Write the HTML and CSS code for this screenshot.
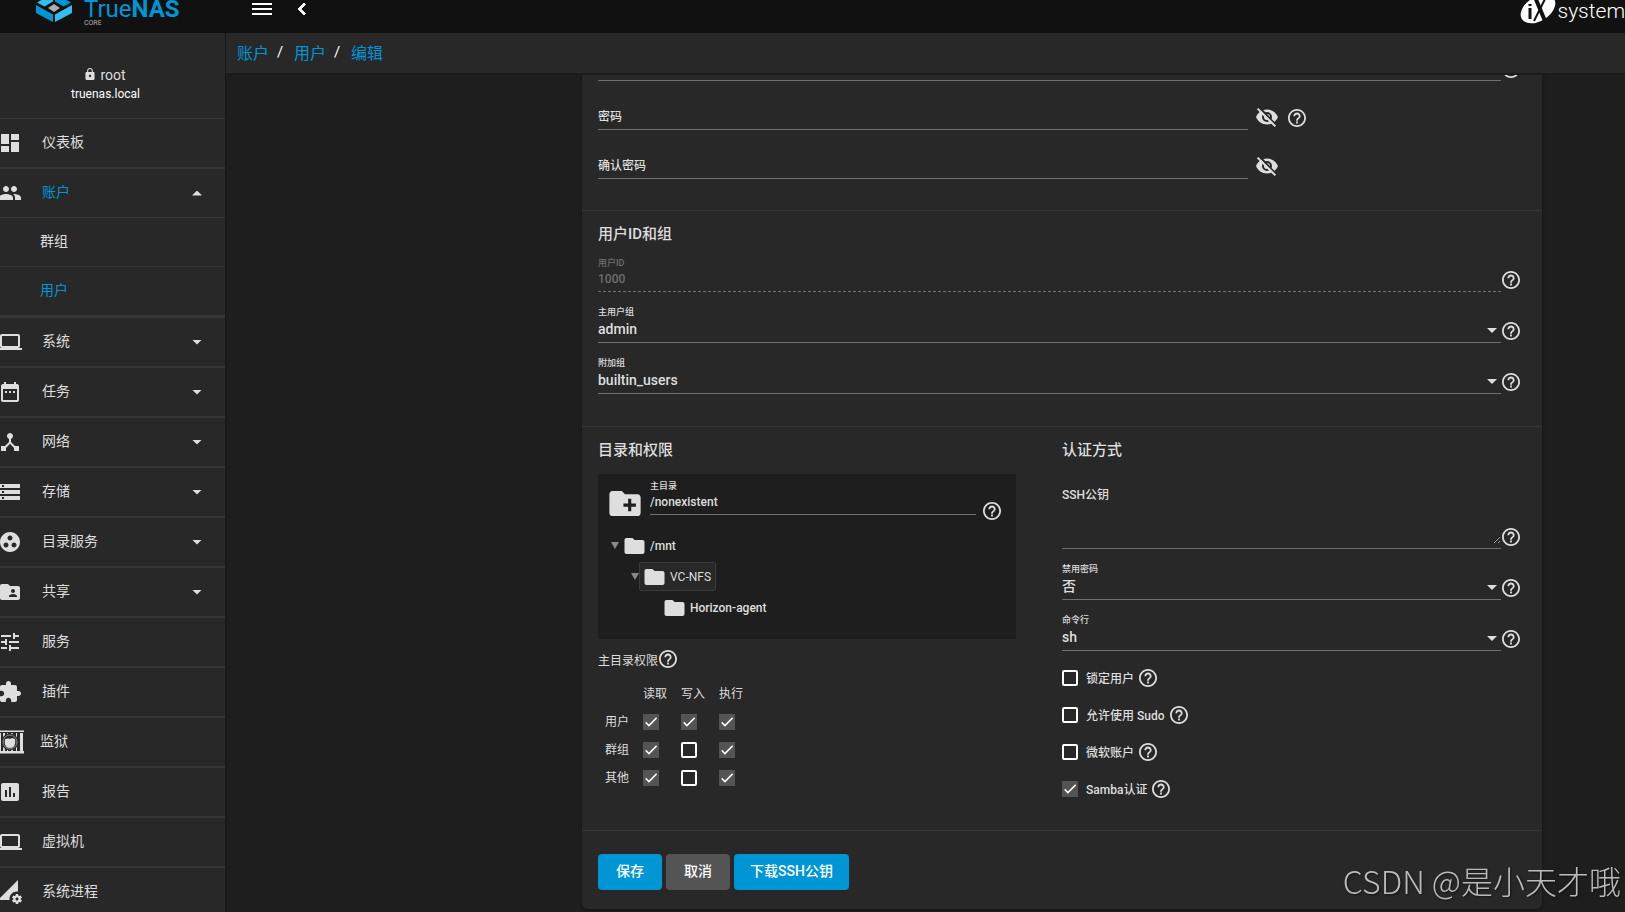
FILE: index.html
```html
<!DOCTYPE html>
<html lang="zh-CN">
<head>
    <meta charset="utf-8" />
    <title>TrueNAS - 编辑用户</title>
    <link rel="stylesheet" href="styles.css">
</head>
<body>
<!-- Icon set -->
<svg class="icon-defs" aria-hidden="true">
    <symbol id="i-dashboard" viewBox="0 0 24 24"><path d="M3 13h8V3H3v10zm0 8h8v-6H3v6zm10 0h8V11h-8v10zm0-18v6h8V3h-8z"/></symbol>
    <symbol id="i-people" viewBox="0 0 24 24"><path d="M16 11c1.66 0 2.99-1.34 2.99-3S17.66 5 16 5c-1.66 0-3 1.34-3 3s1.34 3 3 3zm-8 0c1.66 0 2.99-1.34 2.99-3S9.66 5 8 5C6.34 5 5 6.34 5 8s1.34 3 3 3zm0 2c-2.33 0-7 1.17-7 3.5V19h14v-2.5c0-2.33-4.67-3.5-7-3.5zm8 0c-.29 0-.62.02-.97.05 1.16.84 1.97 1.97 1.97 3.45V19h6v-2.5c0-2.33-4.67-3.5-7-3.5z"/></symbol>
    <symbol id="i-laptop" viewBox="0 0 24 24"><path d="M20 18c1.1 0 2-.9 2-2V6c0-1.1-.9-2-2-2H4c-1.1 0-2 .9-2 2v10c0 1.1.9 2 2 2H0v2h24v-2h-4zM4 6h16v10H4V6z"/></symbol>
    <symbol id="i-tasks" viewBox="0 0 24 24"><path d="M9 11H7v2h2v-2zm4 0h-2v2h2v-2zm4 0h-2v2h2v-2zm2-7h-1V2h-2v2H8V2H6v2H5c-1.11 0-1.99.9-1.99 2L3 20c0 1.1.89 2 2 2h14c1.1 0 2-.9 2-2V6c0-1.1-.9-2-2-2zm0 16H5V9h14v11z"/></symbol>
    <symbol id="i-network" viewBox="0 0 24 24"><path d="M17 16l-4-4V8.82C14.16 8.4 15 7.3 15 6c0-1.66-1.34-3-3-3S9 4.34 9 6c0 1.3.84 2.4 2 2.82V12l-4 4H3v5h5v-3.05l4-4.2 4 4.2V21h5v-5h-4z"/></symbol>
    <symbol id="i-storage" viewBox="0 0 24 24"><path d="M2 20h20v-4H2v4zm2-3h2v2H4v-2zM2 4v4h20V4H2zm4 3H4V5h2v2zm-4 7h20v-4H2v4zm2-3h2v2H4v-2z"/></symbol>
    <symbol id="i-directory" viewBox="0 0 24 24"><path d="M12 2C6.48 2 2 6.48 2 12s4.48 10 10 10 10-4.48 10-10S17.52 2 12 2zM8 17.5c-1.38 0-2.5-1.12-2.5-2.5s1.12-2.5 2.5-2.5 2.5 1.12 2.5 2.5-1.12 2.5-2.5 2.5zM9.5 8c0-1.38 1.12-2.5 2.5-2.5s2.5 1.12 2.5 2.5-1.12 2.5-2.5 2.5S9.5 9.38 9.5 8zm6.5 9.5c-1.38 0-2.5-1.12-2.5-2.5s1.12-2.5 2.5-2.5 2.5 1.12 2.5 2.5-1.12 2.5-2.5 2.5z"/></symbol>
    <symbol id="i-sharing" viewBox="0 0 24 24"><path d="M20 6h-8l-2-2H4c-1.1 0-1.99.9-1.99 2L2 18c0 1.1.9 2 2 2h16c1.1 0 2-.9 2-2V8c0-1.1-.9-2-2-2zm-5 3c1.1 0 2 .9 2 2s-.9 2-2 2-2-.9-2-2 .9-2 2-2zm4 8h-8v-1c0-1.33 2.67-2 4-2s4 .67 4 2v1z"/></symbol>
    <symbol id="i-tune" viewBox="0 0 24 24"><path d="M3 17v2h6v-2H3zM3 5v2h10V5H3zm10 16v-2h8v-2h-8v-2h-2v6h2zM7 9v2H3v2h4v2h2V9H7zm14 4v-2H11v2h10zm-6-4h2V7h4V5h-4V3h-2v6z"/></symbol>
    <symbol id="i-plugin" viewBox="0 0 24 24"><path d="M20.5 11H19V7c0-1.1-.9-2-2-2h-4V3.5C13 2.12 11.88 1 10.5 1S8 2.12 8 3.5V5H4c-1.1 0-1.99.9-1.99 2v3.8H3.5c1.49 0 2.7 1.21 2.7 2.7s-1.21 2.7-2.7 2.7H2V20c0 1.1.9 2 2 2h3.8v-1.5c0-1.49 1.21-2.7 2.7-2.7 1.49 0 2.7 1.21 2.7 2.7V22H17c1.1 0 2-.9 2-2v-4h1.5c1.38 0 2.5-1.12 2.5-2.5S21.88 11 20.5 11z"/></symbol>
    <symbol id="i-jail" viewBox="0 0 24 24">
        <path d="M0 0h24v1H0zM0 23h24v1H0z" fill="#888"/>
        <path d="M0 1h24v1H0zM0 21h24v2H0zM0 3h1v18H0zM3 3h2v18H3zM7 3h1v18H7zM11 3h2v18h-2zM16 3h1v18h-1zM20 3h3v18h-3z"/>
        <circle cx="10" cy="12" r="8.500" fill="#282828"/>
        <circle cx="10" cy="12" r="7" fill="none" stroke="#888" stroke-width="1"/>
        <path d="M5 9c2 0 3-1 5 0l2-1 3 1c1 6-1 9-5 9s-6-3-5-9z"/>
    </symbol>
    <symbol id="i-report" viewBox="0 0 24 24"><path d="M19 3H5c-1.1 0-2 .9-2 2v14c0 1.1.9 2 2 2h14c1.1 0 2-.9 2-2V5c0-1.1-.9-2-2-2zM9 17H7v-7h2v7zm4 0h-2V7h2v10zm4 0h-2v-4h2v4z"/></symbol>
    <symbol id="i-process" viewBox="0 0 24 24"><path d="M18.99 11.5c.34 0 .67.03 1 .07L20 0 0 20h11.56c-.04-.33-.07-.66-.07-1 0-4.14 3.36-7.5 7.5-7.5zm3.71 7.99c.02-.16.04-.32.04-.49 0-.17-.01-.33-.04-.49l1.06-.83c.09-.08.12-.21.06-.32l-1-1.73c-.06-.11-.19-.15-.31-.11l-1.24.5c-.26-.2-.54-.37-.85-.49l-.19-1.32c-.01-.12-.12-.21-.24-.21h-2c-.12 0-.23.09-.25.21l-.19 1.32c-.3.13-.59.29-.85.49l-1.24-.5c-.11-.04-.24 0-.31.11l-1 1.73c-.06.11-.04.24.06.32l1.06.83c-.02.16-.03.32-.03.49 0 .17.01.33.03.49l-1.06.83c-.09.08-.12.21-.06.32l1 1.73c.06.11.19.15.31.11l1.24-.5c.26.2.54.37.85.49l.19 1.32c.02.12.12.21.25.21h2c.12 0 .23-.09.25-.21l.19-1.32c.3-.13.59-.29.84-.49l1.25.5c.11.04.24 0 .31-.11l1-1.73c.06-.11.03-.24-.06-.32l-1.07-.83zm-3.71 1.01c-.83 0-1.5-.67-1.5-1.5s.67-1.5 1.5-1.5 1.5.67 1.5 1.5-.67 1.5-1.5 1.5z"/></symbol>
    <symbol id="i-help" viewBox="2 2 20 20"><path d="M11 18h2v-2h-2v2zm1-16C6.48 2 2 6.48 2 12s4.48 10 10 10 10-4.48 10-10S17.52 2 12 2zm0 18c-4.41 0-8-3.59-8-8s3.59-8 8-8 8 3.59 8 8-3.59 8-8 8zm0-14c-2.21 0-4 1.79-4 4h2c0-1.1.9-2 2-2s2 .9 2 2c0 2-3 1.75-3 5h2c0-2.25 3-2.5 3-5 0-2.21-1.79-4-4-4z"/></symbol>
    <symbol id="i-hidden" viewBox="0 0 24 24">
        <path fill-rule="evenodd" d="M12 4.500C7 4.500 2.700 7.600 1 12c1.700 4.400 6 7.500 11 7.500s9.300-3.100 11-7.500c-1.700-4.400-6-7.500-11-7.500zM12 7a5 5 0 0 1 0 10 5 5 0 0 1 0-10zm0 2a3 3 0 0 0 0 6 3 3 0 0 0 0-6z"/>
        <path d="M4 2l18 19" stroke="#282828" stroke-width="2"/>
        <path d="M2.600 3.600L20.400 21.400" stroke="currentColor" stroke-width="2"/>
    </symbol>
    <symbol id="i-folder" viewBox="2 4 20 16"><path d="M10 4H4c-1.1 0-1.99.9-1.99 2L2 18c0 1.1.9 2 2 2h16c1.1 0 2-.9 2-2V8c0-1.1-.9-2-2-2h-8l-2-2z"/></symbol>
    <symbol id="i-folder-add" viewBox="2 4 20 16"><path d="M20 6h-8l-2-2H4c-1.11 0-1.99.89-1.99 2L2 18c0 1.11.89 2 2 2h16c1.11 0 2-.89 2-2V8c0-1.11-.89-2-2-2zm-1 8h-3v3h-2v-3h-3v-2h3V9h2v3h3v2z"/></symbol>
    <symbol id="i-lock" viewBox="4 1 16 21"><path d="M18 8h-1V6c0-2.76-2.24-5-5-5S7 3.24 7 6v2H6c-1.1 0-2 .9-2 2v10c0 1.1.9 2 2 2h12c1.1 0 2-.9 2-2V10c0-1.1-.9-2-2-2zm-6 9c-1.1 0-2-.9-2-2s.9-2 2-2 2 .9 2 2-.9 2-2 2zm3.1-9H8.9V6c0-1.71 1.39-3.1 3.1-3.1 1.71 0 3.1 1.39 3.1 3.1v2z"/></symbol>
</svg>

<!-- Top bar -->
<header class="topbar">
    <a class="brand" href="#">
        <svg class="brand-mark" viewBox="0 -12 36 34">
            <path fill="#31beec" d="M1 2.500L17-6.500V1.500L8.500 6.500z"/>
            <path fill="#0095d5" d="M35 2.500L19-6.500V1.500L27.500 6.500z"/>
            <path fill="#aeadae" d="M12 8l6-4 6 4-6 4z"/>
            <path fill="#0095d5" d="M0 5l17 9.500V22L0 13z"/>
            <path fill="#31beec" d="M36 5l-17 9.500V22l17-9z"/>
        </svg>
        <span class="brand-text">
            <span class="brand-name">True<b>NAS</b></span>
            <span class="brand-edition">CORE</span>
        </span>
    </a>
    <button class="bar-button menu-toggle" aria-label="菜单">
        <svg width="20" height="12" viewBox="0 0 20 12"><path d="M0 0h20v2H0zM0 5h20v2H0zM0 10h20v2H0z"/></svg>
    </button>
    <button class="bar-button back" aria-label="返回">
        <svg width="8" height="12" viewBox="8 6 8 12"><path d="M15.410 7.410L14 6l-6 6 6 6 1.410-1.410L10.830 12z" stroke="currentColor"/></svg>
    </button>
    <a class="ix" href="#">
        <svg width="36" height="30" viewBox="0 -7 36 30">
            <ellipse cx="18" cy="8" rx="19" ry="12" transform="rotate(-32 18 8)" fill="#fff"/>
            <path d="M10 7v11M10 3v2" stroke="#111" stroke-width="3" fill="none"/>
            <path d="M15-4l10 24" stroke="#111" stroke-width="4"/>
            <path d="M26-4L14 20" stroke="#111" stroke-width="2"/>
        </svg>
        <span>system</span>
    </a>
</header>

<div class="layout">
    <!-- Side menu -->
    <aside class="sidebar">
        <div class="account">
            <div class="account-user"><svg><use href="#i-lock"/></svg>root</div>
            <div class="account-host">truenas.local</div>
        </div>
        <nav>
            <ul class="menu">
                <li><a href="#"><svg><use href="#i-dashboard"/></svg>仪表板</a></li>
                <li class="open">
                    <a href="#" class="active"><svg><use href="#i-people"/></svg>账户<i class="caret up"></i></a>
                    <ul class="submenu">
                        <li><a href="#">群组</a></li>
                        <li><a href="#" class="active">用户</a></li>
                    </ul>
                </li>
                <li><a href="#"><svg><use href="#i-laptop"/></svg>系统<i class="caret"></i></a></li>
                <li><a href="#"><svg><use href="#i-tasks"/></svg>任务<i class="caret"></i></a></li>
                <li><a href="#"><svg><use href="#i-network"/></svg>网络<i class="caret"></i></a></li>
                <li><a href="#"><svg><use href="#i-storage"/></svg>存储<i class="caret"></i></a></li>
                <li><a href="#"><svg><use href="#i-directory"/></svg>目录服务<i class="caret"></i></a></li>
                <li><a href="#"><svg><use href="#i-sharing"/></svg>共享<i class="caret"></i></a></li>
                <li><a href="#"><svg><use href="#i-tune"/></svg>服务</a></li>
                <li><a href="#"><svg><use href="#i-plugin"/></svg>插件</a></li>
                <li><a href="#" class="jail"><svg><use href="#i-jail"/></svg>监狱</a></li>
                <li><a href="#"><svg><use href="#i-report"/></svg>报告</a></li>
                <li><a href="#"><svg><use href="#i-laptop"/></svg>虚拟机</a></li>
                <li><a href="#"><svg><use href="#i-process"/></svg>系统进程</a></li>
            </ul>
        </nav>
    </aside>

    <main class="main">
        <nav class="breadcrumb">
            <a href="#">账户</a><span>/</span><a href="#">用户</a><span>/</span><a href="#">编辑</a>
        </nav>

        <div class="scroll">
            <form class="card">
                <!-- Identification -->
                <section class="section identity">
                    <div class="row">
                        <div class="field"><input type="email" id="email" aria-label="Email"></div>
                        <svg class="help"><use href="#i-help"/></svg>
                    </div>
                    <div class="row password">
                        <div class="field floating">
                            <label for="password">密码</label>
                            <input type="password" id="password">
                        </div>
                        <button type="button" class="eye" aria-label="显示密码"><svg><use href="#i-hidden"/></svg></button>
                        <svg class="help"><use href="#i-help"/></svg>
                    </div>
                    <div class="row password">
                        <div class="field floating">
                            <label for="password2">确认密码</label>
                            <input type="password" id="password2">
                        </div>
                        <button type="button" class="eye" aria-label="显示密码"><svg><use href="#i-hidden"/></svg></button>
                    </div>
                </section>

                <!-- User ID and groups -->
                <section class="section">
                    <h4>用户ID和组</h4>
                    <div class="rows">
                        <div class="row">
                            <div class="field disabled">
                                <label for="uid">用户ID</label>
                                <input type="text" id="uid" value="1000" disabled>
                            </div>
                            <svg class="help"><use href="#i-help"/></svg>
                        </div>
                        <div class="row">
                            <div class="field select">
                                <label for="group">主用户组</label>
                                <select id="group"><option>admin</option></select>
                            </div>
                            <svg class="help"><use href="#i-help"/></svg>
                        </div>
                        <div class="row">
                            <div class="field select">
                                <label for="aux">附加组</label>
                                <select id="aux"><option>builtin_users</option></select>
                            </div>
                            <svg class="help"><use href="#i-help"/></svg>
                        </div>
                    </div>
                </section>

                <!-- Directories / authentication -->
                <div class="section columns">
                    <section class="directories">
                        <h4>目录和权限</h4>
                        <div class="explorer">
                            <div class="explorer-head">
                                <svg class="folder-add"><use href="#i-folder-add"/></svg>
                                <div class="field">
                                    <label for="home">主目录</label>
                                    <input type="text" id="home" value="/nonexistent">
                                </div>
                                <svg class="help"><use href="#i-help"/></svg>
                            </div>
                            <ul class="tree">
                                <li>
                                    <div class="node"><i class="toggle"></i><span class="node-label"><svg><use href="#i-folder"/></svg>/mnt</span></div>
                                    <ul>
                                        <li>
                                            <div class="node"><i class="toggle"></i><span class="node-label selected"><svg><use href="#i-folder"/></svg>VC-NFS</span></div>
                                            <ul>
                                                <li>
                                                    <div class="node leaf"><span class="node-label"><svg><use href="#i-folder"/></svg>Horizon-agent</span></div>
                                                </li>
                                            </ul>
                                        </li>
                                    </ul>
                                </li>
                            </ul>
                        </div>
                        <div class="perm-title">主目录权限<svg class="help"><use href="#i-help"/></svg></div>
                        <table class="perms">
                            <thead>
                                <tr><th></th><th>读取</th><th>写入</th><th>执行</th></tr>
                            </thead>
                            <tbody>
                                <tr>
                                    <th>用户</th>
                                    <td><input type="checkbox" aria-label="用户 读取" checked></td>
                                    <td><input type="checkbox" aria-label="用户 写入" checked></td>
                                    <td><input type="checkbox" aria-label="用户 执行" checked></td>
                                </tr>
                                <tr>
                                    <th>群组</th>
                                    <td><input type="checkbox" aria-label="群组 读取" checked></td>
                                    <td><input type="checkbox" aria-label="群组 写入"></td>
                                    <td><input type="checkbox" aria-label="群组 执行" checked></td>
                                </tr>
                                <tr>
                                    <th>其他</th>
                                    <td><input type="checkbox" aria-label="其他 读取" checked></td>
                                    <td><input type="checkbox" aria-label="其他 写入"></td>
                                    <td><input type="checkbox" aria-label="其他 执行" checked></td>
                                </tr>
                            </tbody>
                        </table>
                    </section>

                    <section class="auth">
                        <h4>认证方式</h4>
                        <div class="rows">
                            <div class="row">
                                <div class="field area">
                                    <label for="sshkey">SSH公钥</label>
                                    <textarea id="sshkey"></textarea>
                                </div>
                                <svg class="help"><use href="#i-help"/></svg>
                            </div>
                            <div class="row">
                                <div class="field select">
                                    <label for="disablepw">禁用密码</label>
                                    <select id="disablepw"><option>否</option></select>
                                </div>
                                <svg class="help"><use href="#i-help"/></svg>
                            </div>
                            <div class="row">
                                <div class="field select">
                                    <label for="shell">命令行</label>
                                    <select id="shell"><option>sh</option></select>
                                </div>
                                <svg class="help"><use href="#i-help"/></svg>
                            </div>
                        </div>
                        <div class="checks">
                            <div class="check"><input type="checkbox" id="lock"><label for="lock">锁定用户</label><svg class="help"><use href="#i-help"/></svg></div>
                            <div class="check"><input type="checkbox" id="sudo"><label for="sudo">允许使用 Sudo</label><svg class="help"><use href="#i-help"/></svg></div>
                            <div class="check"><input type="checkbox" id="ms"><label for="ms">微软账户</label><svg class="help"><use href="#i-help"/></svg></div>
                            <div class="check"><input type="checkbox" id="samba" checked><label for="samba">Samba认证</label><svg class="help"><use href="#i-help"/></svg></div>
                        </div>
                    </section>
                </div>

                <div class="actions">
                    <button type="submit" class="btn primary">保存</button>
                    <button type="button" class="btn">取消</button>
                    <button type="button" class="btn primary">下载SSH公钥</button>
                </div>
            </form>
        </div>
    </main>
</div>

<div class="watermark">CSDN @是小天才哦</div>
</body>
</html>
```

FILE: styles.css
```css
:root {
  --bg1: #1e1e1e;
  --bg2: #282828;
  --line: #353535;
  --fg1: #dedede;
  --fg2: #fff;
  --primary: #0095d5;
  --grey: #545454;
}
* {
  box-sizing: border-box;
}
body {
  margin: 0;
  height: 100vh;
  overflow: hidden;
  display: flex;
  flex-direction: column;
  font-family: Roboto, "Noto Sans CJK SC", sans-serif;
  font-size: 12px;
  background-color: var(--bg1);
  color: var(--fg1);
}
a {
  color: inherit;
  text-decoration: none;
}
ul {
  list-style: none;
  margin: 0;
  padding: 0;
}
svg {
  display: block;
  flex: none;
  fill: currentColor;
}
.icon-defs {
  position: absolute;
  width: 0;
  height: 0;
}

/* ============ Top bar ============ */
.topbar {
  flex: none;
  display: flex;
  align-items: center;
  height: 48px;
  margin-top: -15px;
  background-color: #111;
  overflow: hidden;
}
.brand {
  width: 226px;
  padding-left: 36px;
  display: flex;
  align-items: center;
  gap: 12px;
  color: var(--primary);
}
.brand-mark {
  width: 36px;
  height: 34px;
  margin-bottom: 8px;
}
.brand-text {
  display: flex;
  flex-direction: column;
  padding-top: 7px;
}
.brand-name {
  font-size: 24px;
  line-height: 22px;
}
.brand-name b {
  font-weight: 700;
}
.brand-edition {
  font-size: 7px;
  line-height: 7px;
  color: #aeadae;
}
.bar-button {
  padding: 0;
  border: 0;
  background: none;
  color: var(--fg2);
  cursor: pointer;
}
.menu-toggle {
  margin-left: 26px;
}
.back {
  margin-left: 26px;
}
.ix {
  margin-left: auto;
  display: flex;
  align-items: center;
  gap: 1px;
  font-size: 21px;
  line-height: 24px;
  font-weight: 300;
  color: var(--fg2);
}
.ix span {
  padding-top: 3px;
}

/* ============ Sidebar ============ */
.layout {
  flex: 1;
  min-height: 0;
  display: flex;
}
.sidebar {
  flex: none;
  width: 225px;
  overflow: hidden;
  background-color: var(--bg2);
  box-shadow: 1px 0 2px rgba(0, 0, 0, 0.3);
}
.account {
  height: 85px;
  padding: 32px 14px 0 0;
  text-align: center;
}
.account-user {
  display: flex;
  justify-content: center;
  align-items: center;
  gap: 5px;
  font-size: 14px;
  line-height: 20px;
}
.account-user svg {
  width: 10px;
  height: 12px;
  margin-bottom: 2px;
}
.account-host {
  line-height: 18px;
  color: var(--fg2);
}
.menu > li {
  border-top: 1px solid var(--line);
  border-bottom: 1px solid var(--line);
}
.menu a {
  display: flex;
  align-items: center;
  height: 48px;
  padding: 0 23px 4px 0;
  font-size: 14px;
}
.menu a svg {
  width: 24px;
  height: 24px;
  margin: 4px 20px 0 -2px;
}
.menu a.jail svg {
  margin: 4px 16px 0 0;
}
.menu a.active {
  color: var(--primary);
}
.menu a.active svg,
.menu .caret {
  color: var(--fg1);
}
.submenu li {
  border-top: 1px solid var(--line);
}
.submenu li:last-child {
  border-bottom: 1px solid var(--line);
}
.menu .submenu a {
  padding-left: 40px;
}
.caret {
  width: 10px;
  height: 5px;
  margin: 4px 0 0 auto;
  background-color: currentColor;
  clip-path: polygon(0 0, 100% 0, 50% 100%);
}
.caret.up {
  clip-path: polygon(50% 0, 100% 100%, 0 100%);
}

/* ============ Main ============ */
.main {
  flex: 1;
  min-width: 0;
  display: flex;
  flex-direction: column;
}
.breadcrumb {
  flex: none;
  display: flex;
  align-items: center;
  height: 42px;
  margin-left: 1px;
  padding: 0 11px 2px;
  font-size: 16px;
  background-color: var(--bg2);
  border-bottom: 2px solid #1c1c1c;
}
.breadcrumb a {
  color: var(--primary);
}
.breadcrumb span {
  width: 25px;
  padding-right: 3px;
  text-align: center;
  font-size: 15px;
  color: var(--fg2);
}
.scroll {
  flex: 1;
  min-height: 0;
  overflow: hidden;
  padding: 0 83px 0 357px;
}
.card {
  margin-top: -19px;
  background-color: var(--bg2);
  border-radius: 0 0 6px 6px;
  box-shadow: 0 1px 3px rgba(0, 0, 0, 0.4);
}
.section {
  padding: 13px 22px 32px 16px;
  border-bottom: 1px solid var(--line);
}
.section.identity {
  display: flex;
  flex-direction: column;
  gap: 24px;
  padding-top: 0;
  padding-bottom: 31px;
}
h4 {
  margin: 0 0 11px;
  font-size: 15px;
  line-height: 20px;
  font-weight: 500;
}

/* ============ Fields ============ */
.rows {
  display: flex;
  flex-direction: column;
  gap: 14px;
}
.row {
  display: flex;
  align-items: flex-end;
  gap: 1px;
}
.field {
  flex: 1;
  position: relative;
  display: flex;
  flex-direction: column;
  padding-bottom: 4px;
  border-bottom: 1px solid #707070;
}
.field label {
  font-size: 9px;
  line-height: 12px;
  font-weight: 500;
}
.field input,
.field select,
.field textarea {
  width: 100%;
  height: 20px;
  margin: 0;
  padding: 0;
  border: 0;
  outline: 0;
  background: none;
  color: inherit;
  font-family: inherit;
  font-size: 12px;
  font-weight: 500;
}
.field select {
  appearance: none;
  padding-top: 2px;
  font-size: 14px;
}
.field.select::after {
  content: "";
  position: absolute;
  right: 4px;
  bottom: 9px;
  width: 10px;
  height: 5px;
  background-color: currentColor;
  clip-path: polygon(0 0, 100% 0, 50% 100%);
}
.field.disabled {
  padding: 2px 0;
  color: #6e6e6e;
  border-bottom-style: dashed;
}
.field.floating label {
  position: absolute;
  left: 0;
  top: 2px;
  font-size: 12px;
  line-height: 20px;
}
.field.area {
  padding-top: 16px;
}
.field.area label {
  font-size: 12px;
  line-height: 16px;
}
.field.area textarea {
  height: 41px;
  resize: vertical;
}
.help {
  width: 18px;
  height: 18px;
}
.row .help {
  margin-bottom: 3px;
}
.row.password {
  gap: 8px;
}
.row.password .field {
  flex: 0 1 650px;
}
.eye {
  height: 24px;
  margin: 0 1px 1px -1px;
  padding: 0;
  border: 0;
  background: none;
  color: inherit;
}
.eye svg {
  width: 24px;
  height: 24px;
}

/* ============ Directories ============ */
.section.columns {
  display: grid;
  grid-template-columns: 1fr 1fr;
  padding: 13px 0 32px;
}
.directories {
  padding: 0 46px 0 16px;
}
.auth {
  padding-right: 22px;
}
.explorer {
  height: 165px;
  margin-top: 14px;
  padding: 6px 15px 0 11px;
  background-color: var(--bg1);
}
.explorer-head {
  display: flex;
  align-items: flex-end;
}
.folder-add {
  width: 32px;
  height: 25px;
  margin-bottom: 4px;
}
.explorer .field {
  margin: 0 7px 5px 9px;
  padding-bottom: 2px;
}
.tree {
  margin-top: 10px;
}
.tree ul {
  padding-left: 20px;
}
.node {
  display: flex;
  align-items: center;
  height: 31px;
  padding-left: 2px;
}
.node.leaf {
  padding-left: 9px;
}
.toggle {
  width: 8px;
  height: 7px;
  margin-right: -1px;
  background-color: #8a8a8a;
  clip-path: polygon(0 0, 100% 0, 50% 100%);
}
.node-label {
  display: flex;
  align-items: center;
  gap: 5px;
  height: 29px;
  margin-left: 1px;
  padding: 0 4px;
  border: 1px solid transparent;
  font-weight: 500;
}
.node-label.selected {
  background-color: var(--bg2);
  border-color: #3a3a3a;
  border-radius: 2px;
  font-weight: 400;
}
.node-label svg {
  width: 21px;
  height: 16px;
}
.perm-title {
  display: flex;
  align-items: center;
  gap: 1px;
  height: 18px;
  margin: 11px 0 12px;
}
.perms {
  border-collapse: collapse;
}
.perms tr {
  height: 28px;
}
.perms th,
.perms td {
  width: 38px;
  padding: 0;
  text-align: left;
  font-weight: 400;
}
.perms th {
  padding-bottom: 4px;
}
.perms th:first-child {
  width: 45px;
  padding-left: 7px;
}

/* ============ Checkboxes ============ */
input[type="checkbox"] {
  appearance: none;
  display: block;
  width: 16px;
  height: 16px;
  margin: 0;
  border: 2px solid var(--fg2);
  border-radius: 2px;
}
input[type="checkbox"]:checked {
  border: 0;
  border-radius: 0;
  background-color: var(--grey);
}
input[type="checkbox"]:checked::after {
  content: "";
  display: block;
  height: 16px;
  background-color: var(--fg2);
  clip-path: polygon(14% 56%, 20% 49%, 37% 66%, 82% 21%, 88% 28%, 37% 79%);
}
.checks {
  display: flex;
  flex-direction: column;
  gap: 19px;
  margin-top: 18px;
}
.check {
  display: flex;
  align-items: center;
  height: 18px;
  font-weight: 500;
}
.check label {
  margin: 0 5px 2px 8px;
}

/* ============ Buttons ============ */
.actions {
  display: flex;
  gap: 4px;
  padding: 23px 16px 19px;
}
.btn {
  height: 36px;
  min-width: 64px;
  padding: 0 16px 4px;
  border: 0;
  border-radius: 4px;
  background-color: var(--grey);
  color: var(--fg2);
  font-family: inherit;
  font-size: 14px;
  font-weight: 500;
  cursor: pointer;
}
.btn.primary {
  background-color: var(--primary);
}

.watermark {
  position: fixed;
  right: 4px;
  bottom: 8px;
  font-family: "Noto Sans CJK SC", sans-serif;
  font-size: 32px;
  font-weight: 300;
  line-height: 48px;
  color: #bbb;
  text-shadow: 1px 1px 2px rgba(0, 0, 0, 0.5);
}
```
